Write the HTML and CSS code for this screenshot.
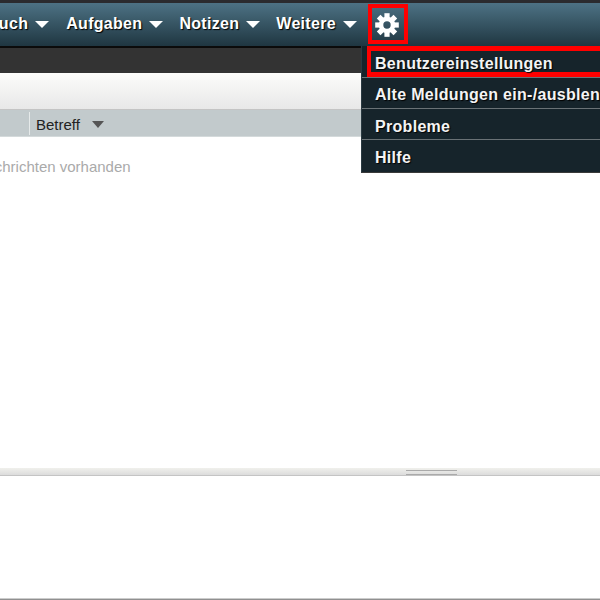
FILE: index.html
```html
<!DOCTYPE html>
<html lang="de">
<head>
<meta charset="utf-8">
<title>Nachrichten</title>
<link rel="stylesheet" href="styles.css">
</head>
<body>
<div class="app">
  <div class="topline"></div>
  <nav class="nav">
    <span class="nav-item first">Buch<i class="caret"></i></span>
    <span class="nav-item">Aufgaben<i class="caret"></i></span>
    <span class="nav-item">Notizen<i class="caret"></i></span>
    <span class="nav-item">Weitere<i class="caret"></i></span>
    <span class="gear-box">
      <svg class="gear" width="24" height="24" viewBox="-12 -12 24 24">
        <circle r="6" fill="none" stroke="#fff" stroke-width="4.600"/>
        <g fill="#fff">
          <rect x="-2.600" y="-11.800" width="5.200" height="5"/>
          <rect x="-2.600" y="-11.800" width="5.200" height="5" transform="rotate(45)"/>
          <rect x="-2.600" y="-11.800" width="5.200" height="5" transform="rotate(90)"/>
          <rect x="-2.600" y="-11.800" width="5.200" height="5" transform="rotate(135)"/>
          <rect x="-2.600" y="-11.800" width="5.200" height="5" transform="rotate(180)"/>
          <rect x="-2.600" y="-11.800" width="5.200" height="5" transform="rotate(225)"/>
          <rect x="-2.600" y="-11.800" width="5.200" height="5" transform="rotate(270)"/>
          <rect x="-2.600" y="-11.800" width="5.200" height="5" transform="rotate(315)"/>
        </g>
      </svg>
    </span>
  </nav>
  <div class="darkbar"></div>
  <div class="toolbar"></div>
  <div class="table-head">
    <span class="spacer"></span>
    <span class="col">Betreff<i class="caret-dark"></i></span>
  </div>
  <div class="list">
    <p class="empty">Keine Nachrichten vorhanden</p>
  </div>
  <div class="splitter"><span class="grip"></span></div>
  <div class="preview"></div>
  <div class="bottom"></div>
  <ul class="menu">
    <li class="menu-item first-item"><span class="active-box">Benutzereinstellungen</span></li>
    <li class="menu-item">Alte Meldungen ein-/ausblenden</li>
    <li class="menu-item">Probleme</li>
    <li class="menu-item">Hilfe</li>
  </ul>
</div>
</body>
</html>
```
FILE: styles.css
```css
* { box-sizing: border-box; }
html, body { margin: 0; padding: 0; }
body { font-family: "Liberation Sans", Arial, sans-serif; background: #fff; overflow: hidden; }
.app { position: relative; width: 600px; height: 600px; overflow: hidden; display: flex; flex-direction: column; }
.topline { height: 3px; background: #2b2b2e; flex: none; }
.nav {
  height: 45px; flex: none; display: flex; align-items: center; padding-bottom: 2px;
  background: linear-gradient(#4d7284, #1f3641);
  border-bottom: 2px solid #0b0b0b;
  color: #fff; font-weight: bold; font-size: 16px; letter-spacing: .3px;
  text-shadow: 1px 1px 1px #000; white-space: nowrap;
}
.nav-item { display: flex; align-items: center; margin-right: 16px; flex: none; }
.nav-item.first { margin-left: -13px; margin-right: 17px; }
.caret { width: 0; height: 0; margin-left: 7px; margin-top: 1px; border-left: 7px solid transparent; border-right: 7px solid transparent; border-top: 7px solid #fff; }
.gear-box { width: 40px; height: 40px; flex: none; margin-left: -5px; align-self: flex-start; margin-top: 1px; padding: 1px 2px 0 0; border: 4px solid #f00; display: flex; align-items: center; justify-content: center; }
.darkbar { height: 25px; flex: none; background: #333; }
.toolbar { height: 37px; flex: none; background: linear-gradient(#fcfcfa, #e8e8e8); border-bottom: 1px solid #c4c4c4; }
.table-head { height: 27px; flex: none; display: flex; align-items: center; background: #c2cacc; border-bottom: 1px solid #d4dadb; font-size: 15px; color: #222; }
.spacer { width: 30px; height: 23px; border-right: 1px solid #e6eaea; flex: none; }
.col { display: flex; align-items: center; margin-left: 6px; padding-top: 2px; }
.caret-dark { width: 0; height: 0; margin-left: 12px; border-left: 6.500px solid transparent; border-right: 6.500px solid transparent; border-top: 7px solid #555; }
.list { height: 331px; flex: none; position: relative; overflow: hidden; }
.empty { margin: 21px 0 0 -67px; font-size: 15px; color: #aaa; white-space: nowrap; }
.splitter { height: 8px; flex: none; background: linear-gradient(#f0f0ec, #dcdcdc); border-bottom: 1px solid #c4c4c4; display: flex; justify-content: flex-start; align-items: flex-start; padding-left: 406px; padding-top: 2px; }
.grip { width: 51px; height: 5px; border-top: 1px solid #aaa; border-bottom: 1px solid #aaa; }
.preview { flex: 1; background: #fff; }
.bottom { height: 2px; flex: none; background: #909090; border-top: 1px solid #ccc; }
.menu {
  position: absolute; left: 361px; top: 46px; width: 270px; margin: 0; padding: 0; list-style: none;
  background: #16242b; border-left: 1px solid #2a3a42; border-bottom: 1px solid #3a3a3a;
  color: #f4f4f4; font-weight: bold; font-size: 16px; letter-spacing: .3px; text-shadow: 1px 1px 1px #000;
}
.menu-item { height: 31px; padding: 4px 0 0 13px; display: flex; align-items: center; white-space: nowrap; border-bottom: 1px solid #6a7276; }
.menu-item:last-child { border-bottom: 0; height: 32px; padding-top: 3px; }
.menu-item:nth-child(3) { padding-top: 5px; }
.menu-item.first-item { height: 32px; padding: 0 0 0 5px; align-items: stretch; }
.active-box { flex: 1; display: flex; align-items: center; padding: 5px 0 0 4px; border: 5px solid #f00; border-width: 5px 4px; }
```
